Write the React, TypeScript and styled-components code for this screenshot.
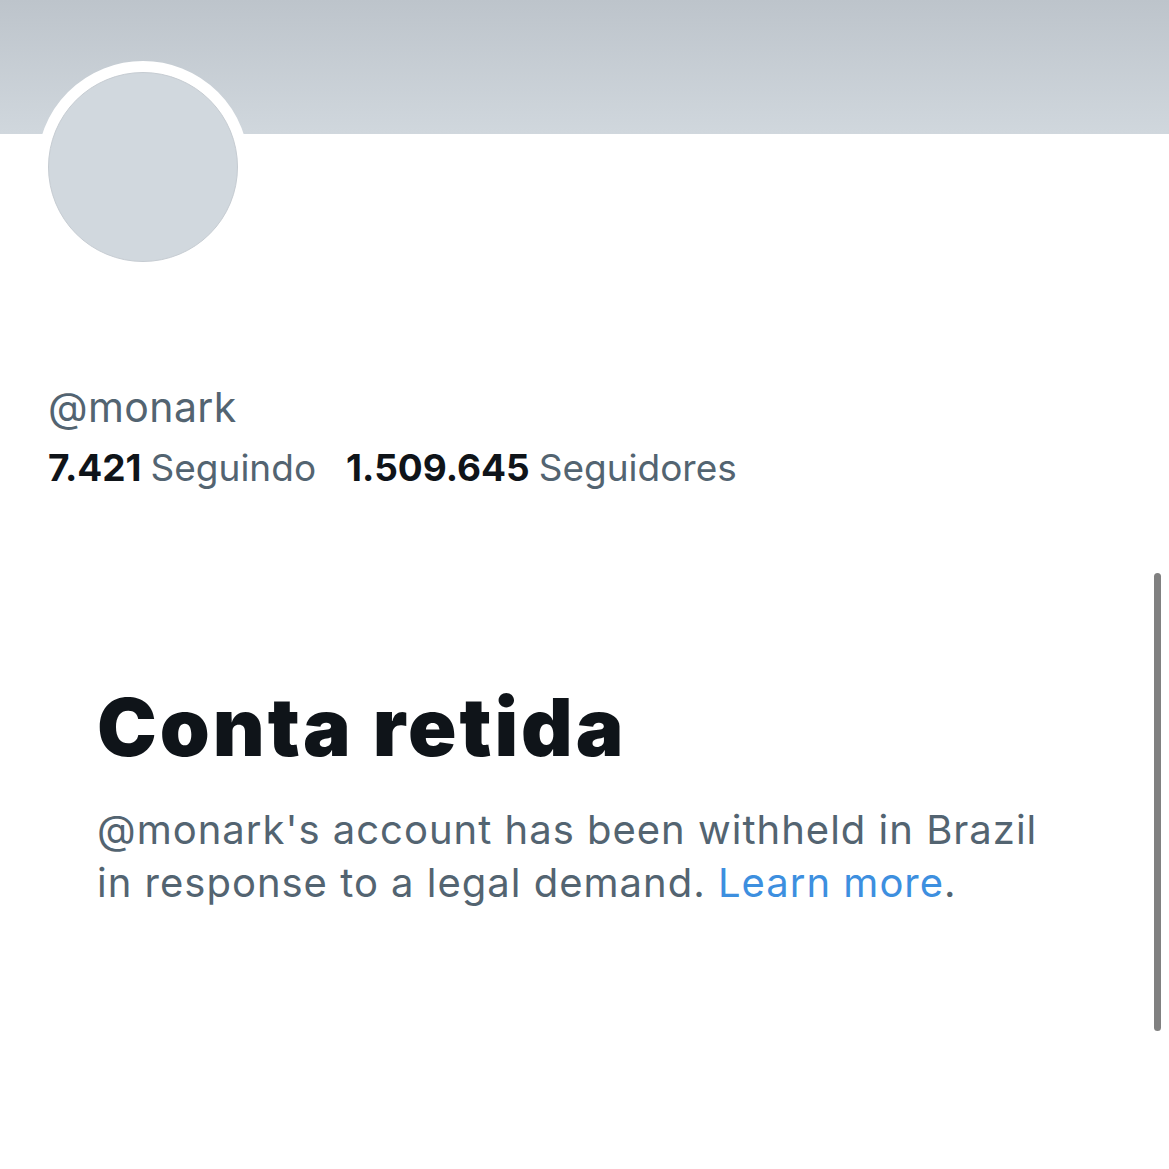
import React from "react";
import styled, { createGlobalStyle } from "styled-components";

const Global = createGlobalStyle`
  html, body { margin: 0; padding: 0; background: #ffffff; }
  body { font-family: Inter, "Noto Sans", sans-serif; -webkit-font-smoothing: antialiased; }
`;

const Page = styled.div`
  position: relative;
  width: 1169px;
  height: 1169px;
  overflow: hidden;
  background: #ffffff;
`;

const Banner = styled.div`
  height: 134px;
  background: linear-gradient(180deg, #bdc4cb 0%, #d0d7dd 100%);
`;

const AvatarRing = styled.div`
  width: 190px;
  height: 190px;
  margin: -73px 0 0 37px;
  border: 11px solid #ffffff;
  border-radius: 50%;
  background: #ffffff;
`;

const AvatarFill = styled.div`
  width: 100%;
  height: 100%;
  box-sizing: border-box;
  border-radius: 50%;
  background: #d1d8de;
  border: 1px solid #c6ccd2;
`;

const Info = styled.div`
  padding: 111px 0 0 48px;
  display: flex;
  flex-direction: column;
  gap: 16px;
`;

const Handle = styled.div`
  font-size: 41px;
  line-height: 46px;
  letter-spacing: 0.4px;
  color: #536471;
`;

const Stats = styled.div`
  display: flex;
  gap: 30px;
  font-size: 37px;
  line-height: 44px;
`;

const Stat = styled.span`
  color: #536471;
  white-space: nowrap;
`;

const Num = styled.b`
  color: #0f1419;
  font-weight: 700;
  margin-right: 9px;
`;

const Notice = styled.section`
  padding: 192px 0 0 97px;
  width: 955px;
`;

const Title = styled.h1`
  margin: 0;
  font-size: 80px;
  line-height: 90px;
  font-weight: 900;
  color: #0f1419;
  letter-spacing: 3px;
`;

const Body = styled.p`
  margin: 31px 0 0;
  font-size: 40px;
  line-height: 53px;
  letter-spacing: 1px;
  color: #536471;
`;

const Link = styled.a`
  color: #3d8fdf;
  text-decoration: none;
`;

const Scrollbar = styled.div`
  position: absolute;
  right: 8px;
  top: 573px;
  width: 7px;
  height: 458px;
  border-radius: 4px;
  background: #808080;
`;

export default function App() {
  return (
    <Page>
      <Global />
      <Banner />
      <AvatarRing>
        <AvatarFill />
      </AvatarRing>
      <Info>
        <Handle>@monark</Handle>
        <Stats>
          <Stat>
            <Num>7.421</Num>Seguindo
          </Stat>
          <Stat>
            <Num>1.509.645</Num>Seguidores
          </Stat>
        </Stats>
      </Info>
      <Notice>
        <Title>Conta retida</Title>
        <Body>
          @monark's account has been withheld in Brazil in response to a legal demand.{" "}
          <Link href="#">Learn more</Link>.
        </Body>
      </Notice>
      <Scrollbar />
    </Page>
  );
}
